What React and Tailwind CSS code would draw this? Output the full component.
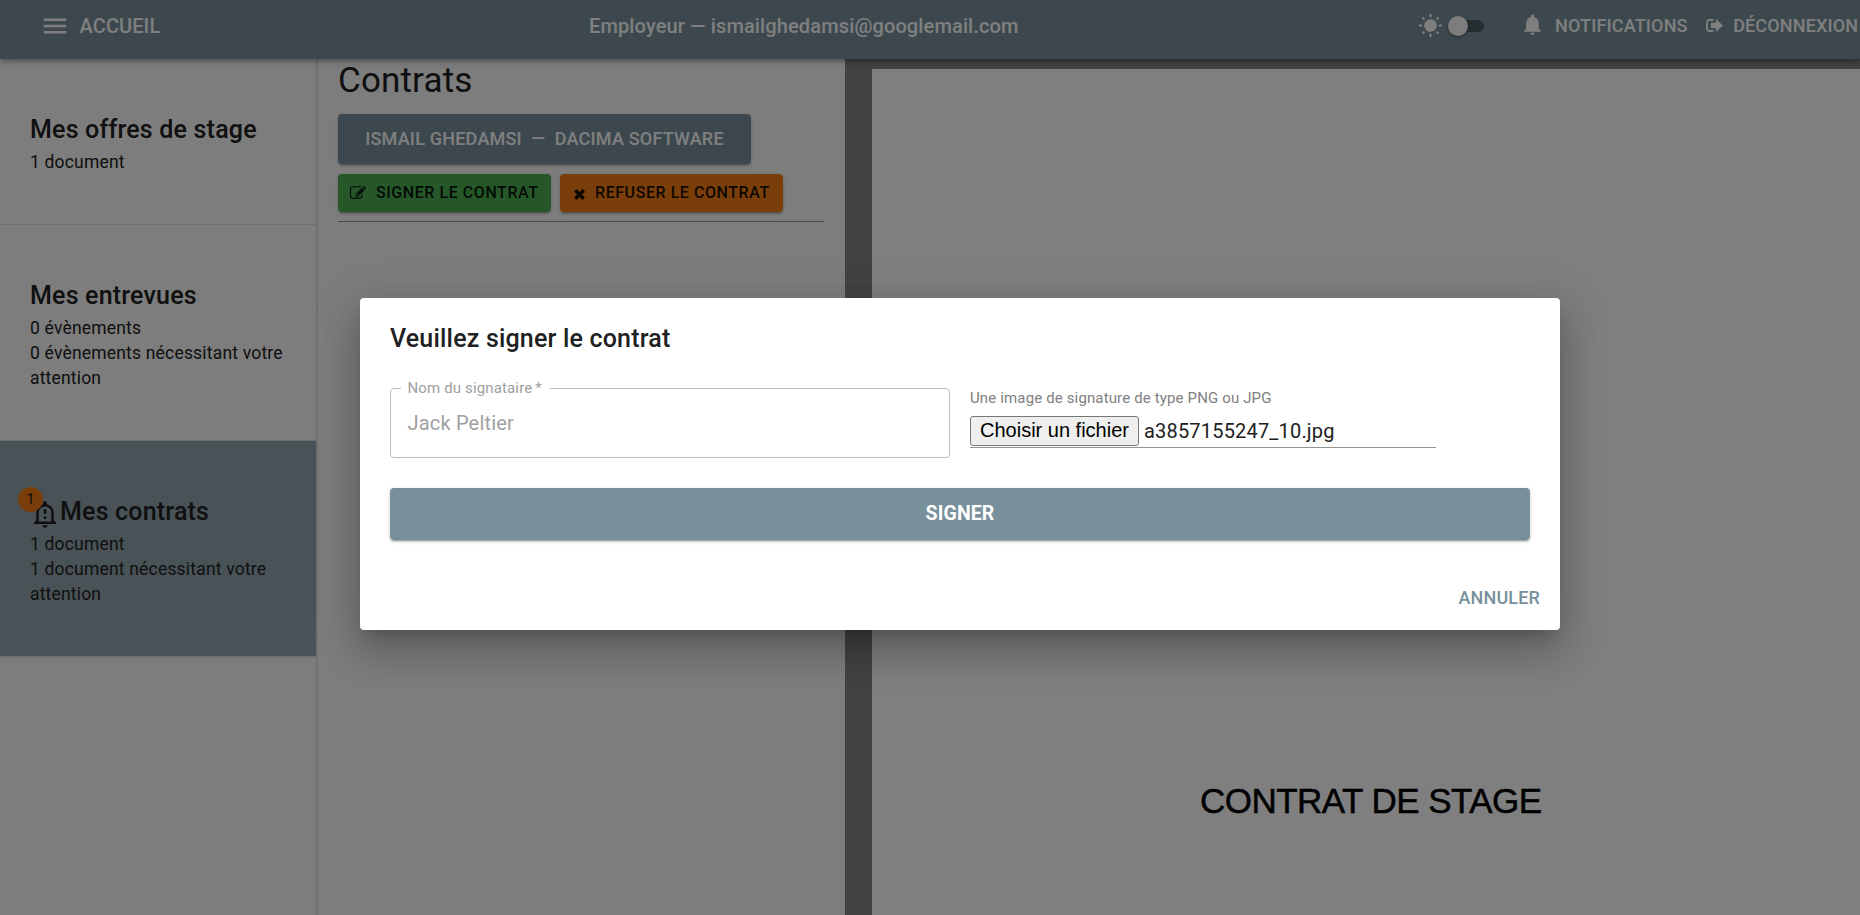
import React from "react";
import { MdMenu, MdNotifications } from "react-icons/md";

const SunIcon = () => (
  <svg className="mb-[2px] size-[23px]" viewBox="0 0 23 23" fill="currentColor">
    <circle cx="11.5" cy="11.5" r="6.3" />
    <g stroke="currentColor" strokeWidth="2">
      <path d="M11.5 0v3.2M11.5 19.8V23M0 11.5h3.2M19.8 11.5H23M3.4 3.4l2 2M17.6 17.6l2 2M19.6 3.4l-2 2M5.4 17.6l-2 2" />
    </g>
  </svg>
);

const SignOutIcon = () => (
  <svg className="h-[13px] w-[17px]" viewBox="0 0 17 13" fill="currentColor">
    <path d="M7.500 1H3.500A2.500 2.500 0 0 0 1 3.500v6A2.500 2.500 0 0 0 3.500 12h4" fill="none" stroke="currentColor" strokeWidth="1.800" />
    <path d="M5 3.800h5V0L17 6.500 10 13V9.200H5z" />
  </svg>
);

const AlertBellIcon = () => (
  <svg className="mt-[3px] size-[30px] shrink-0" viewBox="0 0 24 24" fill="currentColor">
    <path d="M10.010 21.010c0 1.100.89 1.990 1.990 1.990s1.990-.89 1.990-1.990h-3.980zM12 6c2.760 0 5 2.240 5 5v7H7v-7c0-2.760 2.240-5 5-5zm0-4.500c-.83 0-1.500.67-1.500 1.500v1.170C7.360 4.850 5 7.650 5 11v6l-2 2v1h18v-1l-2-2v-6c0-3.350-2.360-6.150-5.500-6.830V3c0-.83-.67-1.500-1.500-1.500zM11 8h2v4h-2V8zm0 6h2v2h-2v-2z" />
  </svg>
);

const EditIcon = () => (
  <svg className="h-[14px] w-4" viewBox="0 0 1792 1536" fill="currentColor">
    <path d="M888 1056l116-116-152-152-116 116v56h96v96h56zm440-720q-16-16-33 1L945 687q-17 17-1 33t33-1l350-350q17-17 1-33zm80 594v190q0 119-84.500 203.500T1120 1408H288q-119 0-203.500-84.500T0 1120V288Q0 169 84.500 84.500T288 0h832q63 0 117 25 15 7 18 23 3 17-9 29l-49 49q-14 14-32 8-23-6-45-6H288q-66 0-113 47t-47 113v832q0 66 47 113t113 47h832q66 0 113-47t47-113V994q0-13 9-22l64-64q15-15 35-7t20 29zm-96-738l288 288-672 672H640V864zm444 132l-92 92-288-288 92-92q28-28 68-28t68 28l152 152q28 28 28 68t-28 68z" />
  </svg>
);

const CrossIcon = () => (
  <svg className="mt-[2px] size-[11px]" viewBox="0 0 11 11" stroke="currentColor" strokeWidth="3.4">
    <path d="M1.300 1.300l8.400 8.400M9.700 1.300L1.300 9.700" />
  </svg>
);

const buttonShadow =
  "shadow-[0_3px_1px_-2px_rgba(0,0,0,0.2),0_2px_2px_0_rgba(0,0,0,0.14),0_1px_5px_0_rgba(0,0,0,0.12)]";

function Header() {
  return (
    <header className="relative z-10 flex h-[59px] shrink-0 items-center bg-[#78909c] pb-[7px] text-white shadow-[0_2px_4px_-1px_rgba(0,0,0,0.2),0_4px_5px_0_rgba(0,0,0,0.14),0_1px_10px_0_rgba(0,0,0,0.12)]">
      <div className="flex w-[589px] items-center pl-10">
        <MdMenu className="size-[30px]" />
        <span className="ml-[9.5px] text-[20px] font-medium tracking-[0.1px]">ACCUEIL</span>
      </div>
      <div className="w-[830px] text-[20px] font-medium tracking-[0.13px]">Employeur — ismailghedamsi@googlemail.com</div>
      <SunIcon />
      <div className="relative ml-2 h-3 w-[34px] rounded-full bg-[#4a5a62]">
        <span className="absolute -top-1 left-[-2px] size-5 rounded-full bg-[#fafafa] shadow-[0_1px_3px_rgba(0,0,0,0.4)]" />
      </div>
      <MdNotifications className="mb-[4px] ml-[36px] size-[25px]" />
      <div className="flex items-center pb-[2px] text-[18px] font-medium tracking-[0.16px]">
        <span className="ml-[10px]">NOTIFICATIONS</span>
        <span className="ml-[18.5px]"><SignOutIcon /></span>
        <span className="ml-[10px]">DÉCONNEXION</span>
      </div>
    </header>
  );
}

function MenuItem({ title, lines, selected, alert }) {
  return (
    <div className={"border-b border-[#e0e0e0] px-[30px] pb-[49px] pt-[51px] " + (selected ? "bg-[#92a4ae]" : "")}>
      <div className="relative flex h-10 items-center">
        {alert && (
          <>
            <AlertBellIcon />
            <span className="absolute -left-[12px] -top-[5px] flex size-[25px] items-center justify-center rounded-full bg-[#f57c14] text-[15px]">
              {alert}
            </span>
          </>
        )}
        <span className="text-[25px] font-medium tracking-[0.0075em]">{title}</span>
      </div>
      {lines.map((l) => (
        <p key={l} className="text-[17.5px] leading-[25px] tracking-[0.01071em]">{l}</p>
      ))}
    </div>
  );
}

function Sidebar() {
  return (
    <nav className="w-[318px] shrink-0 border-r-2 border-[#e0e0e0]">
      <MenuItem title="Mes offres de stage" lines={["1 document"]} />
      <MenuItem title="Mes entrevues" lines={["0 évènements", "0 évènements nécessitant votre attention"]} />
      <MenuItem title="Mes contrats" alert="1" selected lines={["1 document", "1 document nécessitant votre attention"]} />
      <div className="h-px bg-[#e0e0e0]" />
    </nav>
  );
}

function Contracts() {
  return (
    <section className="w-[527px] shrink-0 pl-5 pr-[21px]">
      <h1 className="h-[55px] pt-px text-[35px] leading-[42px] tracking-[0.15px]">Contrats</h1>
      <button className={"flex h-[50px] w-[413px] items-center justify-center whitespace-pre rounded bg-[#78909c] pb-[2px] text-[18px] font-medium tracking-[0.21px] text-white " + buttonShadow}>
        {"ISMAIL GHEDAMSI  —  DACIMA SOFTWARE"}
      </button>
      <div className="mt-[10px] flex gap-[9px]">
        <button className={"flex h-[38px] w-[213px] items-center rounded bg-[#4caf50] pl-3 text-[16px] font-medium tracking-[0.56px] text-black/90 " + buttonShadow}>
          <EditIcon />
          <span className="ml-[10px]">SIGNER LE CONTRAT</span>
        </button>
        <button className={"flex h-[38px] w-[223px] items-center rounded bg-[#f57c14] pl-[14px] text-[16px] font-medium tracking-[0.56px] text-black/90 " + buttonShadow}>
          <CrossIcon />
          <span className="ml-[10px]">REFUSER LE CONTRAT</span>
        </button>
      </div>
      <div className="mt-[9px] h-px bg-[#949494]" />
    </section>
  );
}

function Dialog() {
  return (
    <div className="flex h-[332px] w-[1200px] flex-col rounded bg-white px-[30px] shadow-[0_11px_15px_-7px_rgba(0,0,0,0.2),0_24px_38px_3px_rgba(0,0,0,0.14),0_9px_46px_8px_rgba(0,0,0,0.12)]">
      <h2 className="mt-[21px] text-[25px] font-medium leading-10 tracking-[0.0075em]">Veuillez signer le contrat</h2>
      <div className="mt-[29px] flex h-[70px]">
        <div className="relative flex w-[560px] items-center rounded border border-[#bdbdbd] pl-[16.5px] text-[20px] tracking-[0.00938em] text-[#a0a0a0]">
          Jack Peltier
          <span className="absolute -top-[10px] left-[10px] w-[149px] bg-white pl-[6.5px] text-[15px] leading-[18px] tracking-[0.00938em]">
            Nom du signataire<span className="ml-[3px]">*</span>
          </span>
        </div>
        <div className="ml-5 w-[466px]">
          <p className="mt-px text-[15px] leading-[18px] tracking-[0.00938em] text-[#808080]">Une image de signature de type PNG ou JPG</p>
          <div className="mt-[9px] flex h-8 border-b-[1.500px] border-[#949494]">
            <button className="flex h-[30px] w-[169px] items-center justify-center rounded-[3px] border border-[#767676] bg-[#efefef] pb-[2px] font-['Liberation_Sans',sans-serif] text-[20px] text-black">
              Choisir un fichier
            </button>
            <span className="ml-[5px] text-[20px] leading-[30px] tracking-[0.00938em]">a3857155247_10.jpg</span>
          </div>
        </div>
      </div>
      <button className={"mt-[30px] h-[52px] rounded bg-[#78909c] text-[19.5px] font-bold tracking-[0.1px] text-white " + buttonShadow}>SIGNER</button>
      <div className="-mr-[10px] mt-[43px] text-right text-[18px] font-medium leading-[30px] tracking-[0.15px] text-[#78909c]">ANNULER</div>
    </div>
  );
}

export default function App() {
  return (
    <div className="relative flex h-[915px] w-[1860px] flex-col overflow-hidden bg-[#fafafa] font-[Roboto,sans-serif] text-[#212121]">
      <Header />
      <main className="flex min-h-0 flex-1">
        <Sidebar />
        <Contracts />
        <section className="flex flex-1 bg-[#858585] pl-[27px] pt-[10px]">
          <div className="flex-1 bg-white pl-[328px] pt-[712px] font-['Liberation_Sans',sans-serif] text-[35px] leading-[40px] tracking-[-0.53px] text-black [-webkit-text-stroke:0.5px_black]">
            CONTRAT DE STAGE
          </div>
        </section>
      </main>
      <div className="absolute inset-0 z-20 flex items-start bg-black/50 pl-[360px] pt-[298px]">
        <Dialog />
      </div>
    </div>
  );
}
